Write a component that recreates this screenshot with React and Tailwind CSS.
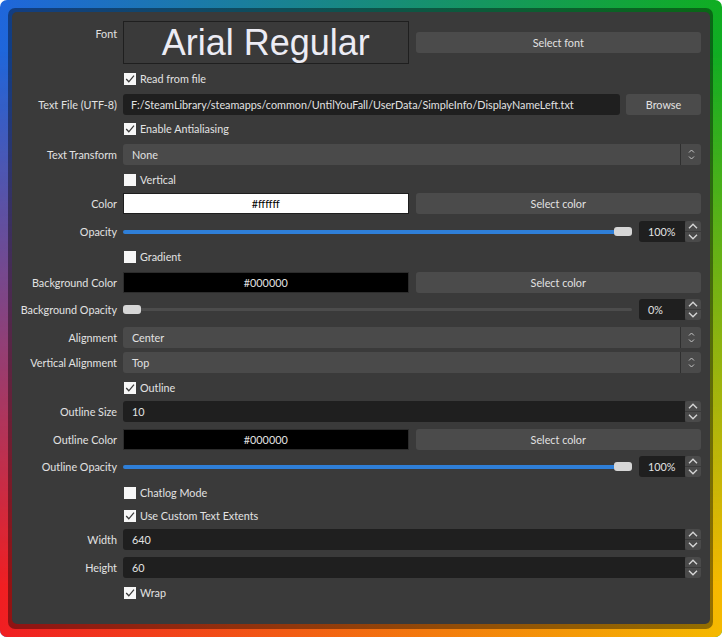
import React from "react";

const Chevron = ({ up }) => (
  <svg width="10" height="6" viewBox="0 0 10 6">
    <polyline
      points={up ? "1,5.2 5,1.2 9,5.2" : "1,0.8 5,4.8 9,0.8"}
      fill="none"
      stroke="currentColor"
      strokeWidth="1.4"
    />
  </svg>
);

const SmallChevron = ({ up }) => (
  <svg width="7" height="4" viewBox="0 0 7 4">
    <polyline
      points={up ? "1,3.5 3.5,1 6,3.5" : "1,0.5 3.5,3 6,0.5"}
      fill="none"
      stroke="currentColor"
      strokeWidth="1"
    />
  </svg>
);

const Row = ({ label, className = "", children, top }) => (
  <div className={`flex ${top ? "items-start h-[43px]" : "items-center h-[21px]"} ${className}`}>
    <div className={`w-[105px] shrink-0 text-right whitespace-nowrap ${top ? "pt-[5px]" : ""}`}>
      {label}
    </div>
    <div className="ml-[6px] flex-1 min-w-0 flex h-full items-center">{children}</div>
  </div>
);

const Check = ({ checked, label, className = "" }) => (
  <Row label="" className={className}>
    <div className="ml-[1px] w-[12px] h-[12px] bg-[#f7f7f7] flex items-center justify-center">
      {checked && (
        <svg width="10" height="10" viewBox="0 0 10 10">
          <polyline points="1.2,5 3.8,7.8 9,1.6" fill="none" stroke="#3c3c3c" strokeWidth="1.3" />
        </svg>
      )}
    </div>
    <span className="ml-[4px]">{label}</span>
  </Row>
);

const Button = ({ children, className = "" }) => (
  <div className={`h-[21px] rounded-[3px] bg-[#4b4b4b] flex items-center justify-center ${className}`}>
    {children}
  </div>
);

const Combo = ({ value }) => (
  <div className="flex-1 h-[21px] flex rounded-[3px] bg-[#4a4a4a]">
    <div className="flex-1 flex items-center pl-[9px]">{value}</div>
    <div className="w-px bg-[#2f2f2f]" />
    <div className="w-[20px] flex flex-col items-center justify-center gap-[3px] text-[#c4c4c4]">
      <SmallChevron up />
      <SmallChevron />
    </div>
  </div>
);

const Spin = ({ value, className = "" }) => (
  <div className={`h-[21px] flex ${className}`}>
    <div className="flex-1 bg-[#1f1f1f] rounded-l-[3px] flex items-center pl-[9px]">{value}</div>
    <div className="w-[16px] flex flex-col gap-px text-[#d4d4d4]">
      <div className="flex-1 flex items-center justify-center rounded-t-[3px] bg-[#4a4a4a]">
        <Chevron up />
      </div>
      <div className="flex-1 flex items-center justify-center rounded-b-[3px] bg-[#4a4a4a]">
        <Chevron />
      </div>
    </div>
  </div>
);

const Slider = ({ full }) => (
  <div className="flex-1 flex items-center h-[10px]">
    {full ? (
      <>
        <div className="flex-1 h-[4px] rounded-l-[2px] bg-[#2f7fd8]" />
        <div className="w-[18px] h-[9px] rounded-[3px] bg-[#d6d6d6]" />
      </>
    ) : (
      <>
        <div className="w-[18px] h-[9px] rounded-[3px] bg-[#d6d6d6]" />
        <div className="flex-1 h-[3px] rounded-r-[2px] bg-[#4c4c4c]" />
      </>
    )}
  </div>
);

const SliderRow = ({ label, full, value, className }) => (
  <Row label={label} className={className}>
    <Slider full={full} />
    <Spin value={value} className="ml-[7px] w-[62px]" />
  </Row>
);

const ColorRow = ({ label, white, value, className }) => (
  <Row label={label} className={className}>
    <div className="flex-1 grid grid-cols-2 gap-[7px]">
      <div
        className={`h-[21px] flex items-center justify-center border ${
          white ? "bg-white border-[#1e1e1e] text-black" : "bg-black border-[#2c2c2c]"
        }`}
      >
        {value}
      </div>
      <Button>Select color</Button>
    </div>
  </Row>
);

export default function App() {
  return (
    <div className="w-[722px] h-[637px] bg-white">
      <div className="relative w-[722px] h-[637px] rounded-[7px] overflow-hidden bg-[linear-gradient(to_right,#1f66dc,#10ae22)]">
        <div className="absolute inset-0 bg-[linear-gradient(to_right,#f01e22,#f5b900)] [mask-image:linear-gradient(to_bottom,transparent_8%,black_92%)]" />
        <div className="relative h-full pt-[8px] pl-[8px] pr-[9px] pb-[8px]">
          <div className="h-full rounded-[7px] bg-black/40 pt-[4px] pl-[4px] pr-[3px] pb-[5px]">
            <div className="h-full rounded-[5px] bg-[#3a3a3a] pt-[9px] pr-[9px] text-[10.8px] leading-[15px] text-[#e2e2e2] font-['Lato',sans-serif]">
              <Row label="Font" top>
                <div className="flex-1 grid grid-cols-2 gap-[7px] items-center">
                  <div className="h-[43px] border border-[#1f1f1f] flex items-center justify-center font-['Liberation_Sans',Arial,sans-serif] text-[36px] leading-none text-[#ececf4]">
                    Arial Regular
                  </div>
                  <Button>Select font</Button>
                </div>
              </Row>
              <Check checked label="Read from file" className="mt-[4px]" />
              <Row label="Text File (UTF-8)" className="mt-[5px]">
                <div className="flex-1 h-[21px] rounded-[3px] bg-[#1f1f1f] flex items-center pl-[8px] whitespace-nowrap overflow-hidden">
                  F:/SteamLibrary/steamapps/common/UntilYouFall/UserData/SimpleInfo/DisplayNameLeft.txt
                </div>
                <Button className="ml-[6px] w-[75px]">Browse</Button>
              </Row>
              <Check checked label="Enable Antialiasing" className="mt-[3px]" />
              <Row label="Text Transform" className="mt-[5px]">
                <Combo value="None" />
              </Row>
              <Check label="Vertical" className="mt-[4px]" />
              <ColorRow label="Color" white value="#ffffff" className="mt-[3px]" />
              <SliderRow label="Opacity" full value="100%" className="mt-[7px]" />
              <Check label="Gradient" className="mt-[4px]" />
              <ColorRow label="Background Color" value="#000000" className="mt-[5px]" />
              <SliderRow label="Background Opacity" value="0%" className="mt-[6px]" />
              <Row label="Alignment" className="mt-[7px]">
                <Combo value="Center" />
              </Row>
              <Row label="Vertical Alignment" className="mt-[4px]">
                <Combo value="Top" />
              </Row>
              <Check checked label="Outline" className="mt-[4px]" />
              <Row label="Outline Size" className="mt-[3px]">
                <Spin value="10" className="flex-1" />
              </Row>
              <ColorRow label="Outline Color" value="#000000" className="mt-[7px]" />
              <SliderRow label="Outline Opacity" full value="100%" className="mt-[6px]" />
              <Check label="Chatlog Mode" className="mt-[5px]" />
              <Check checked label="Use Custom Text Extents" className="mt-[2px]" />
              <Row label="Width" className="mt-[3px]">
                <Spin value="640" className="flex-1" />
              </Row>
              <Row label="Height" className="mt-[7px]">
                <Spin value="60" className="flex-1" />
              </Row>
              <Check checked label="Wrap" className="mt-[4px]" />
            </div>
          </div>
        </div>
      </div>
    </div>
  );
}
